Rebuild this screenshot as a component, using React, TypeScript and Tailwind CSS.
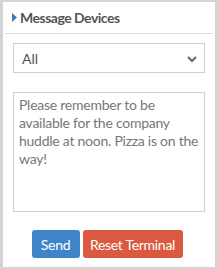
import React, { useState } from "react";

const font = { fontFamily: "Lato, 'Open Sans', sans-serif" };

export default function App() {
  const [target, setTarget] = useState("All");
  const [msg, setMsg] = useState(
    "Please remember to be available for the company huddle at noon. Pizza is on the way!"
  );

  return (
    <div
      className="w-[218px] h-[269px] bg-[#d4d4d4] pl-[3px] pr-[3px] pt-[2px] pb-[2px]"
      style={font}
    >
      <div className="h-full bg-white flex flex-col">
        {/* header */}
        <div className="flex items-center h-[32px] pl-[7px] mx-[2px] border-b border-[#dcdcdc]">
          <svg width="5" height="9" viewBox="0 0 5 9" className="mr-[3px]">
            <path d="M0 0 L5 4.5 L0 9 Z" fill="#3b7dbd" />
          </svg>
          <span className="text-[14px] font-bold text-[#555] tracking-[-0.5px]">Message Devices</span>
        </div>

        <div className="px-[10px] pt-[9px]">
          {/* select */}
          <div className="relative h-[30px] border border-[#cfcfcf] flex items-center pl-[8px]">
            <select
              value={target}
              onChange={(e) => setTarget(e.target.value)}
              className="absolute inset-0 opacity-0"
            >
              <option>All</option>
              <option>Selected</option>
            </select>
            <span className="text-[14px] text-[#555]">{target}</span>
            <svg width="10" height="7" viewBox="0 0 10 7" className="absolute right-[7px] top-[12px]">
              <path d="M1 1 L5 5 L9 1" fill="none" stroke="#666" strokeWidth="2" />
            </svg>
          </div>

          {/* message */}
          <textarea
            value={msg}
            onChange={(e) => setMsg(e.target.value)}
            className="mt-[19px] w-full h-[120px] border border-[#cfcfcf] pl-[5px] pr-[1px] pt-[3px] text-[14px] leading-[18px] tracking-[-0.25px] text-[#777] resize-none outline-none block"
          />

          {/* actions */}
          <div className="flex justify-center gap-[3px] mt-[18px] pr-[4px]">
            <button className="h-[28px] w-[48px] rounded-[3px] bg-[#3d85c8] text-white text-[14px] tracking-[-0.3px]">
              Send
            </button>
            <button className="h-[28px] w-[100px] rounded-[3px] bg-[#d95a40] text-white text-[14px] tracking-[-0.3px]">
              Reset Terminal
            </button>
          </div>
        </div>
      </div>
    </div>
  );
}
